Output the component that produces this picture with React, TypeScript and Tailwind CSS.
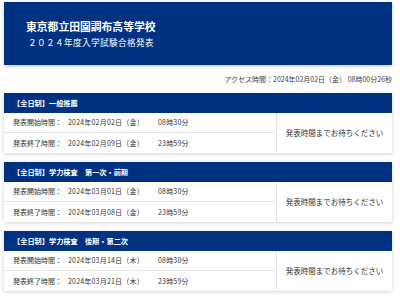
const sections = [
  {
    title: "【全日制】一般推薦",
    start: "2024年02月02日（金）",
    startTime: "08時30分",
    end: "2024年02月09日（金）",
    endTime: "23時59分",
  },
  {
    title: "【全日制】学力検査　第一次・前期",
    start: "2024年03月01日（金）",
    startTime: "08時30分",
    end: "2024年03月08日（金）",
    endTime: "23時59分",
  },
  {
    title: "【全日制】学力検査　後期・第二次",
    start: "2024年03月14日（木）",
    startTime: "08時30分",
    end: "2024年03月21日（木）",
    endTime: "23時59分",
  },
];

const font = { fontFamily: '"Noto Sans CJK JP", "Noto Sans", sans-serif' };

const Row = ({ label, date, time, last }: { label: string; date: string; time: string; last?: boolean }) => (
  <div
    className={`flex h-[20px] items-center whitespace-nowrap text-[7px] text-[#333333] ${
      last ? "" : "border-b border-[#e6e6e6]"
    }`}
  >
    <span className="w-[64px] pl-[9px] shrink-0">{label}</span>
    <span className="w-[90px] shrink-0 tracking-[0.2px]">{date}</span>
    <span className="tracking-[0.2px] text-[#333333]">{time}</span>
  </div>
);

export default function App() {
  return (
    <div className="w-[400px] h-[304px] bg-white overflow-hidden" style={font}>
      <div className="pl-[4px] pr-[8px] pt-[2px]">
        <div className="h-[63px] bg-[#013282] shadow-[0_1px_3px_rgba(0,0,0,0.25)] flex flex-col justify-center pl-[22px] pt-[1px]">
          <h1 className="text-[10.8px] font-bold text-white leading-[15px]">東京都立田園調布高等学校</h1>
          <p className="text-[8.6px] text-white leading-[14px] tracking-[0.4px] mt-[1px] pl-[2px]">２０２４年度入学試験合格発表</p>
        </div>
        <div className="h-[28px] flex items-center justify-end whitespace-nowrap text-[7px] text-[#444444]">
          アクセス時間：2024年02月02日（金） 08時00分26秒
        </div>
        <div className="flex flex-col gap-[9px]">
          {sections.map((s) => (
            <div key={s.title} className="bg-white shadow-[0_1px_4px_rgba(0,0,0,0.18)]">
              <div className="h-[20px] bg-[#013282] flex items-center pl-[9px] text-[7.2px] font-bold text-white whitespace-nowrap">
                {s.title}
              </div>
              <div className="flex">
                <div className="flex-1">
                  <Row label="発表開始時間：" date={s.start} time={s.startTime} />
                  <Row label="発表終了時間：" date={s.end} time={s.endTime} last />
                </div>
                <div className="w-[116px] border-l border-[#e6e6e6] flex items-center justify-center whitespace-nowrap text-[7.5px] text-[#333333]">
                  発表時間までお待ちください
                </div>
              </div>
            </div>
          ))}
        </div>
      </div>
    </div>
  );
}
